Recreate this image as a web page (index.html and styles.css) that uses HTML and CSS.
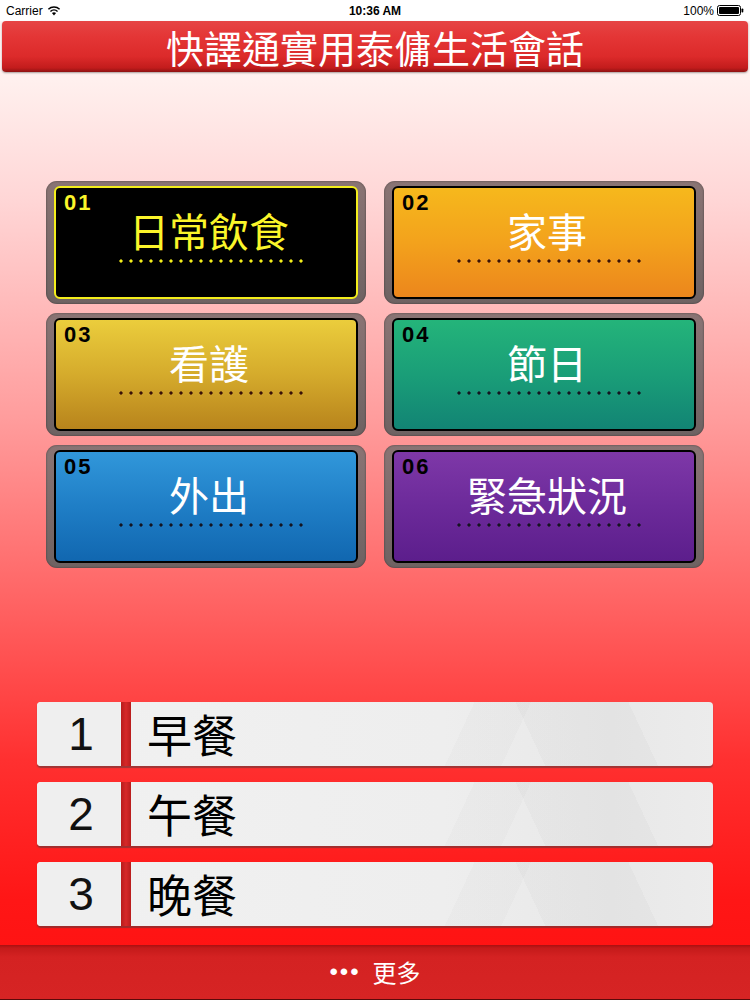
FILE: index.html
```html
<!DOCTYPE html>
<html lang="zh-Hant">
<head>
<meta charset="utf-8">
<title>快譯通實用泰傭生活會話</title>
<link rel="stylesheet" href="styles.css">
</head>
<body>
<div class="page">
  <div class="status">
    <div class="st-left">Carrier
      <svg class="wifi" width="14" height="11" viewBox="0 0 13 10"><path d="M6.5 9.6 L4.6 7.4 A2.8 2.8 0 0 1 8.4 7.4 Z" fill="#000"/><path d="M3.2 5.9 A4.8 4.8 0 0 1 9.8 5.9" stroke="#000" stroke-width="1.4" fill="none"/><path d="M1.3 3.8 A7.6 7.6 0 0 1 11.7 3.8" stroke="#000" stroke-width="1.4" fill="none"/></svg>
    </div>
    <div class="st-mid">10:36 AM</div>
    <div class="st-right">100%
      <svg class="batt" width="27" height="11" viewBox="0 0 27 11"><rect x="0.5" y="0.5" width="23" height="10" rx="2" fill="none" stroke="#000"/><rect x="2" y="2" width="20" height="7" rx="1" fill="#000"/><rect x="24.5" y="3.5" width="1.8" height="4" rx="0.8" fill="#000"/></svg>
    </div>
  </div>

  <div class="header">快譯通實用泰傭生活會話</div>

  <div class="tiles">
    <div class="tile"><div class="inner t1"><div class="num">01</div><div class="ttl">日常飲食</div><div class="dots"></div></div></div>
    <div class="tile"><div class="inner t2"><div class="num">02</div><div class="ttl">家事</div><div class="dots"></div></div></div>
    <div class="tile"><div class="inner t3"><div class="num">03</div><div class="ttl">看護</div><div class="dots"></div></div></div>
    <div class="tile"><div class="inner t4"><div class="num">04</div><div class="ttl">節日</div><div class="dots"></div></div></div>
    <div class="tile"><div class="inner t5"><div class="num">05</div><div class="ttl">外出</div><div class="dots"></div></div></div>
    <div class="tile"><div class="inner t6"><div class="num">06</div><div class="ttl">緊急狀況</div><div class="dots"></div></div></div>
  </div>

  <div class="list">
    <div class="row"><div class="rnum">1</div><div class="rbar"></div><div class="rlabel">早餐</div></div>
    <div class="row"><div class="rnum">2</div><div class="rbar"></div><div class="rlabel">午餐</div></div>
    <div class="row"><div class="rnum">3</div><div class="rbar"></div><div class="rlabel">晚餐</div></div>
  </div>

  <div class="footer"><span class="fdots">•••</span><span class="fmore">更多</span></div>
</div>
</body>
</html>
```
FILE: styles.css
```css
* { box-sizing: border-box; }
html, body { margin: 0; padding: 0; }
body {
  width: 750px;
  height: 1000px;
  overflow: hidden;
  font-family: "Noto Sans CJK TC", "Noto Sans", sans-serif;
}
.page {
  width: 750px;
  height: 1000px;
  display: flex;
  flex-direction: column;
  background: linear-gradient(180deg, #fff6f4 0px, #fff0ee 80px, #ffd6d6 200px, #ff9c9c 420px, #ff6464 600px, #ff3030 760px, #ff1616 900px, #ff1010 1000px);
}
.status {
  height: 21px;
  background: #fff;
  display: flex;
  align-items: center;
  justify-content: space-between;
  padding: 0 6px 0 6px;
  font-family: "Liberation Sans", Arial, sans-serif;
  font-size: 12px;
  color: #000;
}
.st-left, .st-right { display: flex; align-items: center; gap: 4px; width: 120px; }
.st-right { justify-content: flex-end; gap: 3px; }
.st-mid { font-weight: bold; font-size: 12px; }
.header {
  margin: 0 2px;
  height: 51px;
  border-radius: 4px;
  background: linear-gradient(180deg, #e64444 0%, #e43636 30%, #dc2a2a 70%, #c21c1c 92%, #8e1212 100%);
  box-shadow: 0 1px 2px rgba(0,0,0,0.35);
  color: #fff;
  text-align: center;
  font-size: 38px;
  line-height: 51px;
  letter-spacing: 0;
  font-weight: 400;
}
.tiles {
  margin: 109px 0 0 46px;
  display: grid;
  grid-template-columns: 320px 320px;
  grid-auto-rows: 123px;
  column-gap: 18px;
  row-gap: 9px;
}
.tile {
  border-radius: 11px;
  background: linear-gradient(180deg, #8a7474, #6e6262);
  padding: 5px 8px 5px 8px;
  box-shadow: inset 0 0 2px rgba(0,0,0,0.5);
}
.inner {
  height: 100%;
  border: 2px solid #000;
  border-radius: 6px;
  display: flex;
  flex-direction: column;
  align-items: center;
}
.num {
  align-self: flex-start;
  padding: 4px 0 0 8px;
  font-family: "Liberation Sans", Arial, sans-serif;
  font-weight: bold;
  font-size: 22px;
  line-height: 22px;
  letter-spacing: 2px;
  color: #000;
}
.ttl {
  margin-top: -5px;
  padding-left: 6px;
  font-size: 40px;
  line-height: 42px;
  font-weight: 400;
  color: #fff;
}
.dots {
  margin-top: 8px;
  margin-left: 10px;
  width: 191px;
  height: 4px;
  background-image: radial-gradient(circle, #3a1208 1.4px, transparent 1.8px);
  background-size: 10px 4px;
}
.t1 { background: #000; border-color: #f4ee1c; }
.t1 .num, .t1 .ttl { color: #fbf52a; }
.t1 .dots { background-image: radial-gradient(circle, #f4ee1c 1.4px, transparent 1.8px); }
.t2 { background: linear-gradient(180deg, #f6b81c 0%, #f3a21c 50%, #ec861c 100%); }
.t3 { background: linear-gradient(180deg, #ebcd3c 0%, #d5ab2c 50%, #b8841c 100%); }
.t4 { background: linear-gradient(180deg, #24b47a 0%, #1a9e78 50%, #128474 100%); }
.t5 { background: linear-gradient(180deg, #3197da 0%, #1f7ec6 50%, #1167b0 100%); }
.t6 { background: linear-gradient(180deg, #7e38a8 0%, #6c2a9a 50%, #5c1e8c 100%); }
.t4 .dots, .t5 .dots, .t6 .dots { background-image: radial-gradient(circle, #141420 1.4px, transparent 1.8px); }
.list {
  margin: 134px 37px 0 37px;
  display: flex;
  flex-direction: column;
  gap: 16px;
}
.row {
  height: 64px;
  display: flex;
  border-radius: 4px;
  box-shadow: 0 2px 1px rgba(80,60,60,0.55);
  overflow: hidden;
  background:
    linear-gradient(115deg, transparent 62%, rgba(0,0,0,0.015) 62%, rgba(0,0,0,0.015) 70%, transparent 70%),
    linear-gradient(65deg, transparent 72%, rgba(0,0,0,0.02) 72%, rgba(0,0,0,0.025) 88%, transparent 88%),
    linear-gradient(90deg, #f1f1f1 0%, #eeeeee 60%, #e8e8e8 85%, #ececec 100%);
}
.rnum {
  width: 84px;
  font-family: "Liberation Sans", Arial, sans-serif;
  font-size: 46px;
  line-height: 64px;
  text-align: center;
  color: #111;
  background: #efefef;
  padding-left: 4px;
}
.rbar {
  width: 10px;
  background: linear-gradient(90deg, #b81c1c, #d62828 50%, #b81c1c);
}
.rlabel {
  flex: 1;
  padding-left: 16px;
  font-size: 45px;
  line-height: 64px;
  color: #000;
}
.footer {
  margin-top: auto;
  height: 55px;
  background: linear-gradient(180deg, #a81010 0px, #c41a1a 3px, #d42222 12px, #d62424 100%);
  border-bottom: 1px solid #5a0a0a;
  display: flex;
  align-items: center;
  justify-content: center;
  gap: 12px;
  color: #fff;
}
.fdots { font-family: "Liberation Sans", Arial, sans-serif; font-size: 24px; letter-spacing: 2px; }
.fmore { font-size: 24px; line-height: 30px; }
```
